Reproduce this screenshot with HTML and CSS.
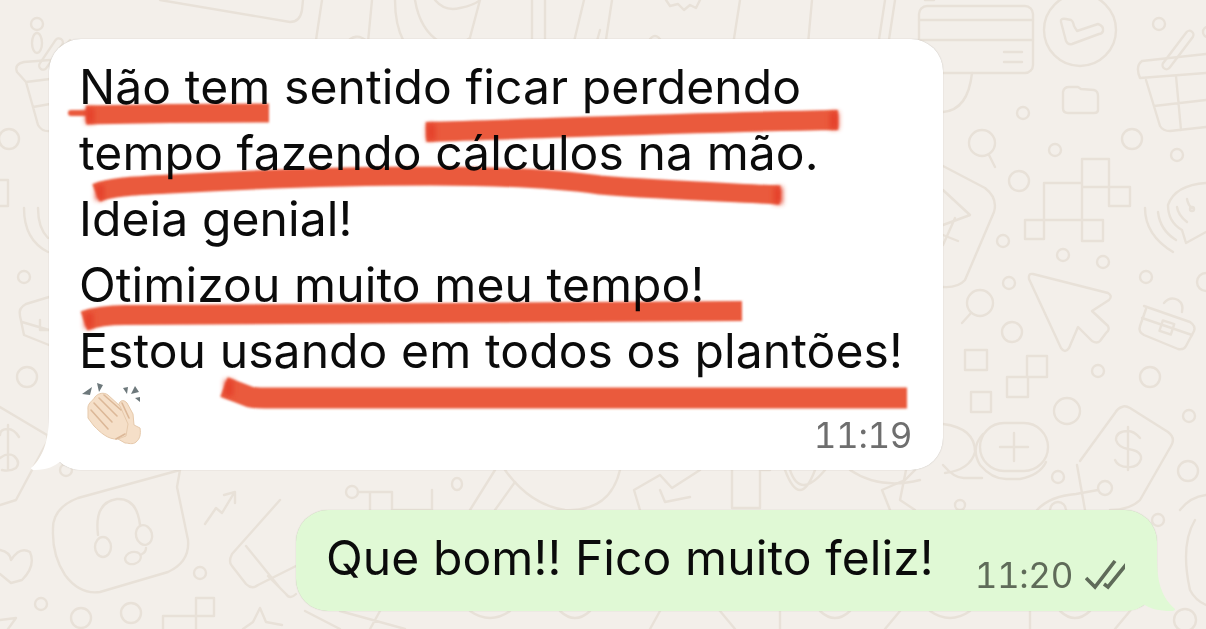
FILE: index.html
```html
<!DOCTYPE html>
<html lang="pt-BR">
<head>
    <meta charset="UTF-8">
    <meta name="viewport" content="width=device-width, initial-scale=1.0">
    <title>Conversa</title>
    <link rel="stylesheet" href="styles.css">
</head>
<body>

    <!-- doodle wallpaper, page coordinates -->
    <svg class="wallpaper" viewBox="0 0 1206 629" aria-hidden="true">
        <!-- top strip -->
        <path d="M160 0 L290 22 Q300 22 302 10 L303 0"/>
        <ellipse cx="37" cy="43" rx="5" ry="10"/>
        <path d="M70 40 Q65 45 60 60 M80 45 Q88 55 95 60"/>
        <path d="M322 0 L316 40 Q320 62 335 66 L345 45 Q355 30 368 42 M368 42 L372 0"/>
        <path d="M395 0 Q395 50 430 66 Q455 70 468 45 L480 0 M415 0 Q420 30 440 42 Q460 46 470 38 M435 0 Q445 12 460 8 Q475 5 480 0"/>
        <path d="M532 0 V40 M545 0 V40 M584 0 L572 50 Q575 66 590 66 L600 30 M612 0 L602 66 M640 66 L648 42 Q655 30 662 42 L660 66"/>
        <path d="M666 0 L670 6 L678 4 L684 10 L690 5 L696 8 L700 0"/>
        <path d="M740 0 L733 45 Q745 65 770 58 Q790 50 805 66 M812 0 L806 66"/>
        <ellipse cx="838" cy="60" rx="5" ry="10"/>
        <path d="M885 0 L875 66 M895 0 L885 66"/>
        <!-- left column -->
        <path d="M24 62 L50 60 M17 72 Q14 64 24 62 M17 72 L26 82 L38 125 Q42 132 50 131 M26 82 L50 79 M33 107 L50 104"/>
        <rect x="33" y="50" width="36" height="8" rx="4" transform="rotate(-56 51 54)"/>
        <circle cx="37" cy="24" r="6"/>
        <circle cx="9" cy="139" r="10"/>
        <path d="M0 180 H8 V206 H0"/>
        <path d="M24 208 Q24 240 48 252 M38 208 Q38 228 48 238"/>
        <circle cx="24" cy="277" r="6"/>
        <path d="M26 304 L49 297 M26 304 Q18 308 20 316 L24 335 L49 345 M22 322 L49 330 M40 320 V330 H49"/>
        <circle cx="27" cy="377" r="10"/>
        <path d="M0 407 L47 435 M47 435 L48 440 L16 500 L0 505"/>
        <path d="M8 425 V470 M19 437 Q14 429 8 429 Q0 429 0 435 M0 458 Q8 452 14 456 Q21 462 16 468 Q10 472 2 470"/>
        <!-- bottom left -->
        <circle cx="66" cy="470" r="6"/>
        <path d="M53 530 Q52 508 78 498 L180 470 L177 487 L188 540 Q190 562 168 572 L100 592 Q80 595 65 575 Q52 555 53 530 Z"/>
        <path d="M98 535 Q94 502 117 499 Q137 498 140 525"/>
        <ellipse cx="103" cy="547" rx="8" ry="10"/>
        <ellipse cx="144" cy="535" rx="8" ry="10" transform="rotate(-15 144 535)"/>
        <ellipse cx="133" cy="558" rx="8" ry="6" transform="rotate(-15 133 558)"/>
        <path d="M146 548 Q146 552 142 554"/>
        <path d="M205 524 L216 508 L222 513 L234 493 M224 495 L235 492 L235 503"/>
        <path d="M0 550 Q10 552 11 560 Q20 546 30 552 Q36 566 22 580 L11 583 L0 574"/>
        <circle cx="41" cy="604" r="6"/>
        <circle cx="81" cy="618" r="10"/>
        <circle cx="131" cy="613" r="10"/>
        <circle cx="200" cy="573" r="6"/>
        <path d="M163 629 V616 H196 V598 H214 V616 H196 V629"/>
        <path d="M260 608 L266 622 L282 625 M260 608 L253 622 L243 629"/>
        <path d="M0 620 L16 618 L8 629"/>
        <path d="M280 500 L232 554 Q228 562 232 566 L246 584 Q252 590 258 585 L296 566 M246 546 L280 588 M268 576 L286 594 Q290 600 296 594"/>
        <!-- between the bubbles -->
        <circle cx="352" cy="492" r="6"/>
        <path d="M358 492 H392 V510 M370 492 V510 M392 510 H432 V490"/>
        <ellipse cx="457" cy="484" rx="5" ry="6"/>
        <path d="M470 510 L495 470 M495 510 L515 482"/>
        <path d="M505 470 Q530 505 565 510 Q610 512 620 470"/>
        <path d="M640 510 L634 490 L660 475 L672 488 L700 470 M660 490 L665 502 L690 497"/>
        <path d="M732 508 V470 M732 508 H760 V470"/>
        <path d="M762 470 H770 M785 470 Q800 510 815 470 M790 470 Q800 500 825 470"/>
        <path d="M890 510 L882 490 L905 480 L915 470"/>
        <path d="M850 470 Q880 490 920 480"/>
        <!-- bottom strip -->
        <path d="M305 611 L340 629 M380 611 L370 629 M340 611 L405 629 M470 611 Q490 625 510 611 M560 611 Q575 625 590 611"/>
        <path d="M660 611 L650 629 M720 611 L735 629 M780 611 V629 M820 611 Q835 625 850 611 M900 611 L885 629 M930 611 Q950 625 970 611"/>
        <path d="M1030 611 V629 M1060 611 Q1075 625 1090 611 M1130 611 L1115 629"/>
        <circle cx="1185" cy="620" r="11"/>
        <!-- right column, top -->
        <rect x="919" y="6" width="114" height="67" rx="8"/>
        <path d="M919 20 H1033 M919 40 H1033 M1004 52 H1022 M1004 62 H1022"/>
        <path d="M925 0 L934 0 M972 73 Q968 110 943 112"/>
        <circle cx="1080" cy="30" r="36"/>
        <path d="M1061 22 Q1060 18 1066 19 L1071 20 Q1073 21 1074 26 L1077 31 L1098 24 Q1104 26 1103 31 Q1102 34 1099 34 L1072 44 Q1068 45 1066 41 Z"/>
        <circle cx="1159" cy="24" r="6"/>
        <path d="M1142 61 L1206 54 M1142 61 Q1135 66 1140 78 L1206 73 M1146 80 L1160 126 Q1163 131 1170 131 L1206 127 M1154 106 L1206 100 M1176 76 L1181 130"/>
        <rect x="1155" y="46" width="46" height="8" rx="4" transform="rotate(-53 1178 50)"/>
        <circle cx="1208" cy="32" r="5"/>
        <path d="M1063 92 Q1064 87 1069 87 L1078 87 L1081 89 L1094 90 Q1098 91 1098 96 V110 Q1098 113 1094 113 L1068 113 Q1063 113 1063 108 Z"/>
        <circle cx="1023" cy="113" r="6"/>
        <circle cx="982" cy="143" r="13"/>
        <path d="M989 155 L995 167"/>
        <circle cx="1055" cy="150" r="6"/>
        <circle cx="1132" cy="139" r="10"/>
        <circle cx="1177" cy="155" r="6"/>
        <circle cx="1019" cy="181" r="10"/>
        <path d="M1044 220 V183 H1082 M1082 241 V159 H1109 V187 H1082 M1109 187 H1130 V206 H1109 V187 M1025 220 H1103 V241 H1082 M1025 220 V239 H1044 V220"/>
        <path d="M943 166 L985 188 Q998 198 994 212 L965 280 Q958 288 943 287"/>
        <path d="M943 190 L970 215 L943 225 M955 218 L943 245 M943 235 L958 241"/>
        <circle cx="1003" cy="241" r="6"/>
        <circle cx="1063" cy="255" r="6"/>
        <circle cx="1103" cy="262" r="6"/>
        <circle cx="1009" cy="283" r="6"/>
        <circle cx="1146" cy="277" r="6"/>
        <path d="M1145 208 Q1145 235 1173 252 M1158 212 Q1160 230 1176 240"/>
        <path d="M1206 183 Q1175 185 1168 205 Q1168 222 1182 230 L1186 243 L1206 232"/>
        <path d="M1177 207 Q1178 215 1187 222 M1187 199 Q1188 205 1192 208"/>
        <circle cx="1192" cy="209" r="2"/>
        <circle cx="1206" cy="282" r="9"/>
        <!-- right column, bottom -->
        <circle cx="980" cy="303" r="13"/>
        <path d="M971 313 L962 323"/>
        <circle cx="1012" cy="332" r="10"/>
        <path d="M1033 274 L1108 293 Q1113 296 1109 300 L1092 311 L1108 326 Q1110 330 1106 333 L1100 341 Q1097 344 1092 341 L1078 327 L1069 348 Q1065 354 1061 348 L1029 279 Q1028 273 1033 274 Z"/>
        <path d="M1144 306 L1190 322 Q1196 326 1194 331 L1186 346 Q1184 350 1178 349 L1144 335 Q1138 332 1140 326 L1146 309"/>
        <path d="M1164 303 Q1170 296 1178 300 Q1184 304 1182 312 M1142 318 L1192 335"/>
        <rect x="1161" y="322" width="12" height="11" transform="rotate(18 1167 327)"/>
        <rect x="965" y="350" width="22" height="20"/>
        <path d="M1027 377 V356 M1027 377 H1047 V356 H1027 M1027 377 V377 H1007 V397 H1028 V377"/>
        <rect x="971" y="392" width="20" height="20"/>
        <circle cx="1098" cy="371" r="6"/>
        <circle cx="1150" cy="377" r="10"/>
        <circle cx="1067" cy="411" r="13"/>
        <circle cx="1189" cy="416" r="6"/>
        <circle cx="1188" cy="471" r="10"/>
        <circle cx="1058" cy="477" r="6"/>
        <rect x="980" y="423" width="68" height="48" rx="24"/>
        <path d="M983 434 Q970 448 980 465 Q992 479 1006 479 L1020 479 Q1040 475 1046 462"/>
        <path d="M1000 447 H1028 M1014 433 V461"/>
        <path d="M943 424 Q975 428 975 452 Q970 470 945 473 M943 465 Q955 479 965 478 L982 478"/>
        <path d="M1122 407 Q1125 405 1130 408 L1168 432 Q1176 438 1171 446 L1140 500 Q1130 510 1110 510 M1080 461 L1115 413 Q1118 408 1122 407 M1077 465 L1085 510"/>
        <path d="M1128 427 V470 M1140 438 Q1134 431 1128 431 Q1116 431 1116 440 Q1118 447 1128 449 Q1142 451 1141 459 Q1138 468 1128 467 Q1118 467 1115 460"/>
        <circle cx="1105" cy="488" r="7"/>
        <path d="M1037 510 Q1050 496 1076 494 L1098 490"/>
        <circle cx="1058" cy="510" r="8"/>
        <path d="M1206 495 Q1190 497 1180 510"/>
        <circle cx="1158" cy="520" r="6"/>
        <circle cx="960" cy="505" r="5"/>
        <path d="M906 470 L900 500 L915 510"/>
        <path d="M1195 520 Q1180 545 1190 590 Q1195 600 1206 605"/>
    </svg>

    <main class="chat">
        <section class="bubble bubble--in">
            <svg class="tail tail--in" viewBox="0 0 50 56" aria-hidden="true">
                <path d="M18 0 C18 22 14 42 0 54 Q0 56 4 56 C16 56 24 52 30 47 C34 52 42 56 50 56 L50 0 Z"/>
            </svg>
            <p class="bubble__text">Não tem sentido ficar perdendo<br>tempo fazendo cálculos na mão.<br>Ideia genial!<br>Otimizou muito meu tempo!<br>Estou usando em todos os plantões!</p>
            <div class="bubble__foot">
                <svg class="clap" viewBox="82 385 62 64" aria-label="aplausos">
                    <path class="clap__spark" d="M82 396 L92 389 L90 397 Z M97 385 L103 387 L99 394 Z M123 390 L128 389 L127 396 Z M131 396 L135 388 L139 394 Z M135 400 L140 399 L140 404 Z"/>
                    <path class="clap__skin" d="M120 404 C122 402 124 402 127 405 L133 416 L134 427 L140 430 C141 436 140 441 136 444 C133 447 128 445 125 445 L118 441 L112 420 Z"/>
                    <path class="clap__skin" d="M88 412 C87 405 92 404 95 399 C98 395 104 394 108 397 L120 408 L128 426 L126 438 L118 441 C108 442 100 434 94 428 L88 420 Z"/>
                    <path class="clap__line" d="M91 412 L108 431 M94 405 L112 424 M99 400 L117 418 M104 397 L121 412 M122 405 L129 420 M116 441 L125 436"/>
                </svg>
                <span class="time">11:19</span>
            </div>
        </section>

        <section class="bubble bubble--out">
            <svg class="tail tail--out" viewBox="0 0 50 56" aria-hidden="true">
                <path d="M32 0 C32 22 34 40 50 54 Q50 56 46 56 C34 56 26 54 18 49 C14 54 8 56 0 56 L0 0 Z"/>
            </svg>
            <p class="bubble__text">Que bom!! Fico muito feliz!</p>
            <div class="bubble__meta">
                <span class="time time--out">11:20</span>
                <svg class="ticks" viewBox="0 0 46 30" aria-label="lida">
                    <path d="M1 18 L10 27 L30 1 M19 24 L23 27 L44 1"/>
                </svg>
            </div>
        </section>
    </main>

    <!-- marker strokes drawn over the first message -->
    <svg class="marker" viewBox="0 0 1206 629" aria-hidden="true">
        <filter id="soft"><feGaussianBlur stdDeviation="0.8"/></filter>
        <filter id="softer"><feGaussianBlur stdDeviation="2.5"/></filter>
        <g filter="url(#soft)">
            <path class="marker__thin" d="M71 113 H88"/>
            <path d="M86 115 C130 114 200 113 269 113" stroke-width="19"/>
            <path d="M426 132 C560 128 700 122 838 120" stroke-width="20"/>
            <path d="M96 193 C110 187 130 186 170 184 C260 179 350 176 430 176 C500 176 550 178 600 185 C660 190 720 192 780 195" stroke-width="19"/>
            <path d="M84 321 C95 317 105 315 125 315 C300 315 520 312 742 311" stroke-width="20"/>
            <path d="M224 387 L250 397 Q255 398 265 398 L907 398" stroke-width="21"/>
        </g>
        <g filter="url(#softer)">
            <path class="marker__end" d="M90 108 V123 M431 124 V140 M834 112 V129 M100 185 V200 M778 187 V204 M89 313 V328 M229 380 V396"/>
        </g>
    </svg>

</body>
</html>
```

FILE: styles.css
```css
* {
    box-sizing: border-box;
}
html, body {
    margin: 0;
    padding: 0;
}
body {
    position: relative;
    width: 1206px;
    height: 629px;
    overflow: hidden;
    background-color: #f3efea;
    font-family: Inter, "Liberation Sans", sans-serif;
    color: #0b0b0b;
}
.wallpaper, .marker {
    position: absolute;
    top: 0;
    left: 0;
    width: 1206px;
    height: 629px;
}
.wallpaper {
    fill: none;
    stroke: #e8e1d8;
    stroke-width: 2.4;
    stroke-linejoin: round;
    stroke-linecap: round;
}
.chat {
    position: relative;
    display: flex;
    flex-direction: column;
    padding-top: 39px;
}
.bubble {
    position: relative;
    border-radius: 32px;
}
.bubble--in {
    width: 894px;
    height: 431px;
    margin-left: 49px;
    padding: 15px 31px 0 30px;
    background-color: #ffffff;
    box-shadow: 0 0 1px rgba(120, 110, 95, 0.5);
}
.bubble--out {
    display: flex;
    align-items: flex-start;
    width: 861px;
    height: 101px;
    margin: 40px 0 0 296px;
    padding: 15px 28px 0 30px;
    background-color: #e0f9d5;
    box-shadow: 0 0 1px rgba(120, 110, 95, 0.4);
}
.tail {
    position: absolute;
    bottom: 0;
    width: 50px;
    height: 56px;
}
.tail--in {
    left: -18px;
    fill: #ffffff;
}
.tail--out {
    right: -18px;
    fill: #e0f9d5;
}
.bubble__text {
    margin: 0;
    font-size: 48px;
    line-height: 66px;
    letter-spacing: 0.1px;
    white-space: nowrap;
}
.bubble__foot {
    display: flex;
    justify-content: space-between;
    align-items: flex-start;
    margin-top: -1px;
}
.clap {
    width: 62px;
    height: 64px;
    margin: 0 0 0 3px;
}
.clap__spark {
    fill: #6d787b;
}
.clap__skin {
    fill: #f5dfc8;
    stroke: #e6c9ab;
    stroke-width: 1;
}
.clap__line {
    fill: none;
    stroke: #dcb898;
    stroke-width: 1.6;
    stroke-linecap: round;
}
.time {
    margin-top: 32px;
    font-size: 35px;
    line-height: 40px;
    letter-spacing: -0.4px;
    font-variant-numeric: tabular-nums;
    color: #6e6e6e;
}
.time--out {
    margin-top: 0;
    color: #5f6b59;
}
.bubble__meta {
    display: flex;
    align-items: center;
    flex-shrink: 0;
    gap: 12px;
    margin: 30px 0 0 41px;
}
.ticks {
    flex-shrink: 0;
    width: 46px;
    height: 30px;
    fill: none;
    stroke: #5f6b59;
    stroke-width: 3.6;
}
.marker {
    mix-blend-mode: multiply;
}
.marker path {
    fill: none;
    stroke: #ea5a3c;
    stroke-linejoin: round;
}
.marker .marker__thin {
    stroke-width: 6;
    stroke-linecap: round;
}
.marker .marker__end {
    stroke: #e5432a;
    stroke-width: 9;
}
```
